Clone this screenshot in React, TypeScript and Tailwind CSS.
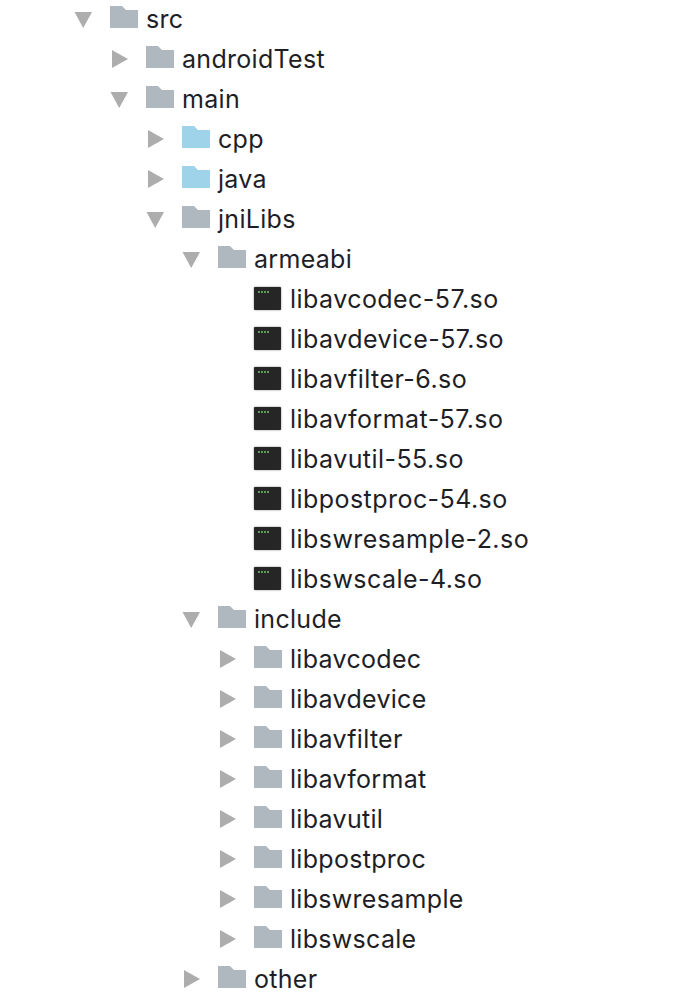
type Node = {
  name: string;
  kind?: "folder" | "source" | "lib";
  open?: boolean;
  children?: Node[];
};

const libs = [
  "libavcodec-57.so",
  "libavdevice-57.so",
  "libavfilter-6.so",
  "libavformat-57.so",
  "libavutil-55.so",
  "libpostproc-54.so",
  "libswresample-2.so",
  "libswscale-4.so",
];

const includes = [
  "libavcodec",
  "libavdevice",
  "libavfilter",
  "libavformat",
  "libavutil",
  "libpostproc",
  "libswresample",
  "libswscale",
];

const tree: Node = {
  name: "src",
  open: true,
  children: [
    { name: "androidTest" },
    {
      name: "main",
      open: true,
      children: [
        { name: "cpp", kind: "source" },
        { name: "java", kind: "source" },
        {
          name: "jniLibs",
          open: true,
          children: [
            {
              name: "armeabi",
              open: true,
              children: libs.map((name) => ({ name, kind: "lib" as const })),
            },
            {
              name: "include",
              open: true,
              children: includes.map((name) => ({ name })),
            },
            { name: "other" },
          ],
        },
      ],
    },
  ],
};

function Arrow({ open }: { open?: boolean }) {
  return (
    <svg width="18" height="18" viewBox="0 0 18 18" className="shrink-0">
      {open ? (
        <path d="M0.5 2H18L9.2 18Z" fill="#adadad" />
      ) : (
        <path d="M2 0L18 9L2 18Z" fill="#adadad" />
      )}
    </svg>
  );
}

function Folder({ color }: { color: string }) {
  return (
    <svg width="28" height="22" viewBox="0 0 28 22" className="-mt-[4px] shrink-0">
      <path d="M0 0H12L16 4H28V22H0Z" fill={color} />
    </svg>
  );
}

function LibIcon() {
  return (
    <div className="-mt-[2px] flex h-[23px] w-[27px] shrink-0 gap-[1px] rounded-[1px] bg-[#262626] pl-[4px] pt-[4px] shadow-[0_0_2px_0_rgba(0,0,0,0.5)]">
      <span className="h-[2px] w-[2px] bg-[#5f9a5c]" />
      <span className="h-[2px] w-[2px] bg-[#5f9a5c]" />
      <span className="h-[2px] w-[2px] bg-[#5f9a5c]" />
      <span className="h-[2px] w-[2px] bg-[#5f9a5c]" />
    </div>
  );
}

function Item({ node }: { node: Node }) {
  const isLib = node.kind === "lib";
  return (
    <li>
      <div className="flex h-10 items-center">
        <div className="flex w-[36px] shrink-0 items-center">
          {!isLib && <Arrow open={node.open} />}
        </div>
        {isLib ? (
          <LibIcon />
        ) : (
          <Folder color={node.kind === "source" ? "#9fd3ea" : "#afb8bf"} />
        )}
        <span
          className={
            isLib
              ? "ml-[9px] whitespace-nowrap text-[25px] leading-none tracking-[0.45px] text-[#1e1e26]"
              : "ml-[8px] whitespace-nowrap text-[25px] leading-none tracking-[0.3px] text-[#1e1e26]"
          }
        >
          {node.name}
        </span>
      </div>
      {node.children && (
        <ul className="ml-9">
          {node.children.map((child) => (
            <Item key={child.name} node={child} />
          ))}
        </ul>
      )}
    </li>
  );
}

export default function App() {
  return (
    <div className="h-[996px] w-[690px] overflow-hidden bg-white pl-[74px] font-['Inter',sans-serif]">
      <ul className="-mt-px">
        <Item node={tree} />
      </ul>
    </div>
  );
}
